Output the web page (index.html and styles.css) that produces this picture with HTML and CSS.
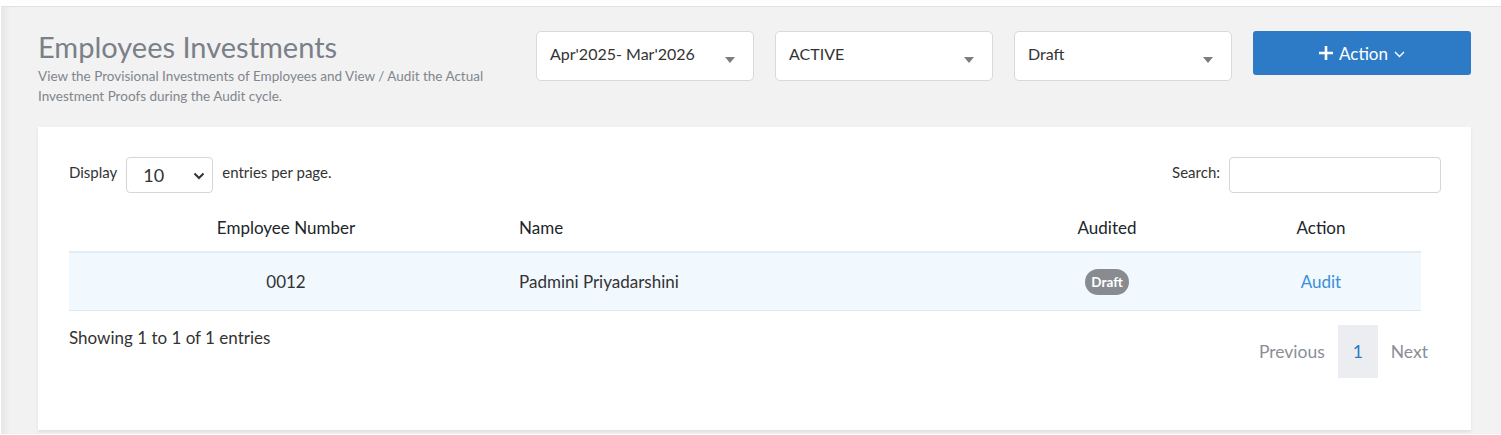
FILE: index.html
```html
<!DOCTYPE html>
<html lang="en">

<head>
    <meta charset="UTF-8">
    <title>Employees Investments</title>
    <link rel="stylesheet" href="styles.css">
</head>

<body>
    <div class="page">
        <div class="page-header">
            <div class="page-title">
                <h1>Employees Investments</h1>
                <p>View the Provisional Investments of Employees and View / Audit the Actual Investment Proofs during the Audit cycle.</p>
            </div>
            <div class="filters">
                <div class="filter-select">
                    <span>Apr'2025- Mar'2026</span>
                    <svg class="caret" width="10" height="6" viewBox="0 0 10 6"><path d="M0 0H10L5 6Z" fill="#7d7d7d"/></svg>
                </div>
                <div class="filter-select">
                    <span>ACTIVE</span>
                    <svg class="caret" width="10" height="6" viewBox="0 0 10 6"><path d="M0 0H10L5 6Z" fill="#7d7d7d"/></svg>
                </div>
                <div class="filter-select">
                    <span>Draft</span>
                    <svg class="caret" width="10" height="6" viewBox="0 0 10 6"><path d="M0 0H10L5 6Z" fill="#7d7d7d"/></svg>
                </div>
                <button class="btn-action">
                    <svg width="14" height="14" viewBox="0 0 14 14"><path d="M7 0V14M0 7H14" stroke="#fff" stroke-width="2.6"/></svg>
                    <span>Action</span>
                    <svg width="11" height="7" viewBox="0 0 11 7"><path d="M1 1L5.5 5.5L10 1" stroke="#fff" stroke-width="1.4" fill="none"/></svg>
                </button>
            </div>
        </div>

        <div class="card">
            <div class="table-tools">
                <div class="length">
                    <span>Display</span>
                    <div class="length-select">
                        <span>10</span>
                        <svg width="12" height="8" viewBox="0 0 12 8"><path d="M1.5 1.5L6 6L10.5 1.5" stroke="#333" stroke-width="2" fill="none"/></svg>
                    </div>
                    <span>entries per page.</span>
                </div>
                <div class="search">
                    <span>Search:</span>
                    <div class="search-input"></div>
                </div>
            </div>

            <table class="data-table">
                <thead>
                    <tr>
                        <th class="col-num">Employee Number</th>
                        <th class="col-name">Name</th>
                        <th class="col-audit">Audited</th>
                        <th class="col-action">Action</th>
                    </tr>
                </thead>
                <tbody>
                    <tr>
                        <td class="col-num">0012</td>
                        <td class="col-name">Padmini Priyadarshini</td>
                        <td class="col-audit"><span class="badge">Draft</span></td>
                        <td class="col-action"><a href="#">Audit</a></td>
                    </tr>
                </tbody>
            </table>

            <div class="table-footer">
                <div class="info">Showing 1 to 1 of 1 entries</div>
                <div class="paging">
                    <span class="page-item">Previous</span>
                    <span class="page-item current">1</span>
                    <span class="page-item">Next</span>
                </div>
            </div>
        </div>
    </div>
</body>

</html>
```

FILE: styles.css
```css
body {
    font-family: Lato, 'Noto Sans', sans-serif;
    margin: 0;
    background-color: white;
    color: #333;
}

.page {
    margin: 6px 0 0 1px;
    border-top: 1px solid #e3e3e3;
    border-left: 2px solid #e6eaef;
    background-color: #f2f2f2;
    box-shadow: inset 6px 0 6px -4px rgba(0, 0, 0, 0.06);
    height: 428px;
    box-sizing: border-box;
    overflow: hidden;
}

.page-header {
    display: flex;
    justify-content: space-between;
    align-items: flex-start;
    padding: 23px 30px 0 35px;
}

.page-title h1 {
    margin: -2px 0 0;
    font-size: 29px;
    font-weight: 400;
    color: #7a8088;
    line-height: 38px;
}

.page-title p {
    margin: 0;
    width: 470px;
    font-size: 13.5px;
    line-height: 20px;
    color: #80868d;
}

.filters {
    display: flex;
    gap: 21px;
    padding-top: 1px;
}

.filter-select {
    width: 218px;
    height: 50px;
    box-sizing: border-box;
    background-color: white;
    border: 1px solid #d9d9d9;
    border-radius: 5px;
    display: flex;
    align-items: center;
    justify-content: space-between;
    padding: 0 18px 0 13px;
    font-size: 16px;
    color: #333;
}

.filter-select span {
    margin-top: -5px;
}

.filter-select .caret {
    margin-top: 7px;
}

.btn-action {
    width: 218px;
    height: 44px;
    border: none;
    border-radius: 3px;
    background-color: #2d7bc6;
    color: white;
    font-family: inherit;
    font-size: 17px;
    display: flex;
    align-items: center;
    justify-content: center;
    gap: 6px;
    cursor: pointer;
}

.btn-action svg:last-child {
    margin-top: 3px;
}

.card {
    margin: 21px 30px 0 35px;
    background-color: white;
    padding: 30px 30px 52px 31px;
    box-shadow: 0 2px 3px rgba(0, 0, 0, 0.08);
}

.table-tools {
    display: flex;
    justify-content: space-between;
    align-items: flex-start;
    font-size: 15px;
}

.length,
.search {
    display: flex;
    align-items: flex-start;
    gap: 9px;
}

.length > span,
.search > span {
    line-height: 30px;
}

.length-select {
    width: 87px;
    height: 36px;
    box-sizing: border-box;
    border: 1px solid #d6d6d6;
    border-radius: 4px;
    display: flex;
    align-items: center;
    justify-content: space-between;
    padding: 0 7px 0 16px;
    font-size: 18px;
}

.length-select svg {
    margin-top: 2px;
}

.search-input {
    width: 212px;
    height: 36px;
    box-sizing: border-box;
    border: 1px solid #d6d6d6;
    border-radius: 4px;
}

.data-table {
    width: calc(100% - 20px);
    table-layout: fixed;
    border-collapse: collapse;
    margin-top: 10px;
    font-size: 17px;
}

.data-table th {
    font-weight: 400;
    color: #212529;
    height: 49px;
    padding: 0 16px;
    box-sizing: border-box;
}

.data-table td {
    height: 57px;
    padding: 0 16px;
    background-color: #f1f8fe;
    border-top: 2px solid #e3ecf5;
    border-bottom: 1px solid #dbe7f2;
    color: #333;
}

.col-num {
    width: 434px;
    text-align: center;
}

.col-name {
    text-align: left;
}

.col-audit {
    width: 228px;
    text-align: center;
}

.col-action {
    width: 200px;
    text-align: center;
}

.badge {
    display: inline-block;
    vertical-align: middle;
    background-color: #888c91;
    color: white;
    font-size: 13.5px;
    font-weight: 700;
    line-height: 26px;
    padding: 0 6px;
    border-radius: 13px;
}

.col-action a {
    color: #3a8fd9;
    text-decoration: none;
}

.table-footer {
    display: flex;
    justify-content: space-between;
    align-items: flex-start;
    margin-top: 15px;
}

.info {
    font-size: 17px;
    line-height: 24px;
    color: #333;
}

.paging {
    display: flex;
    font-size: 17.5px;
    color: #8a8f96;
    margin-top: -1px;
}

.page-item {
    height: 53px;
    line-height: 53px;
    padding: 0 13px;
}

.page-item.current {
    width: 40px;
    padding: 0;
    text-align: center;
    background-color: #ebedf0;
    color: #2d7bc6;
}
```
